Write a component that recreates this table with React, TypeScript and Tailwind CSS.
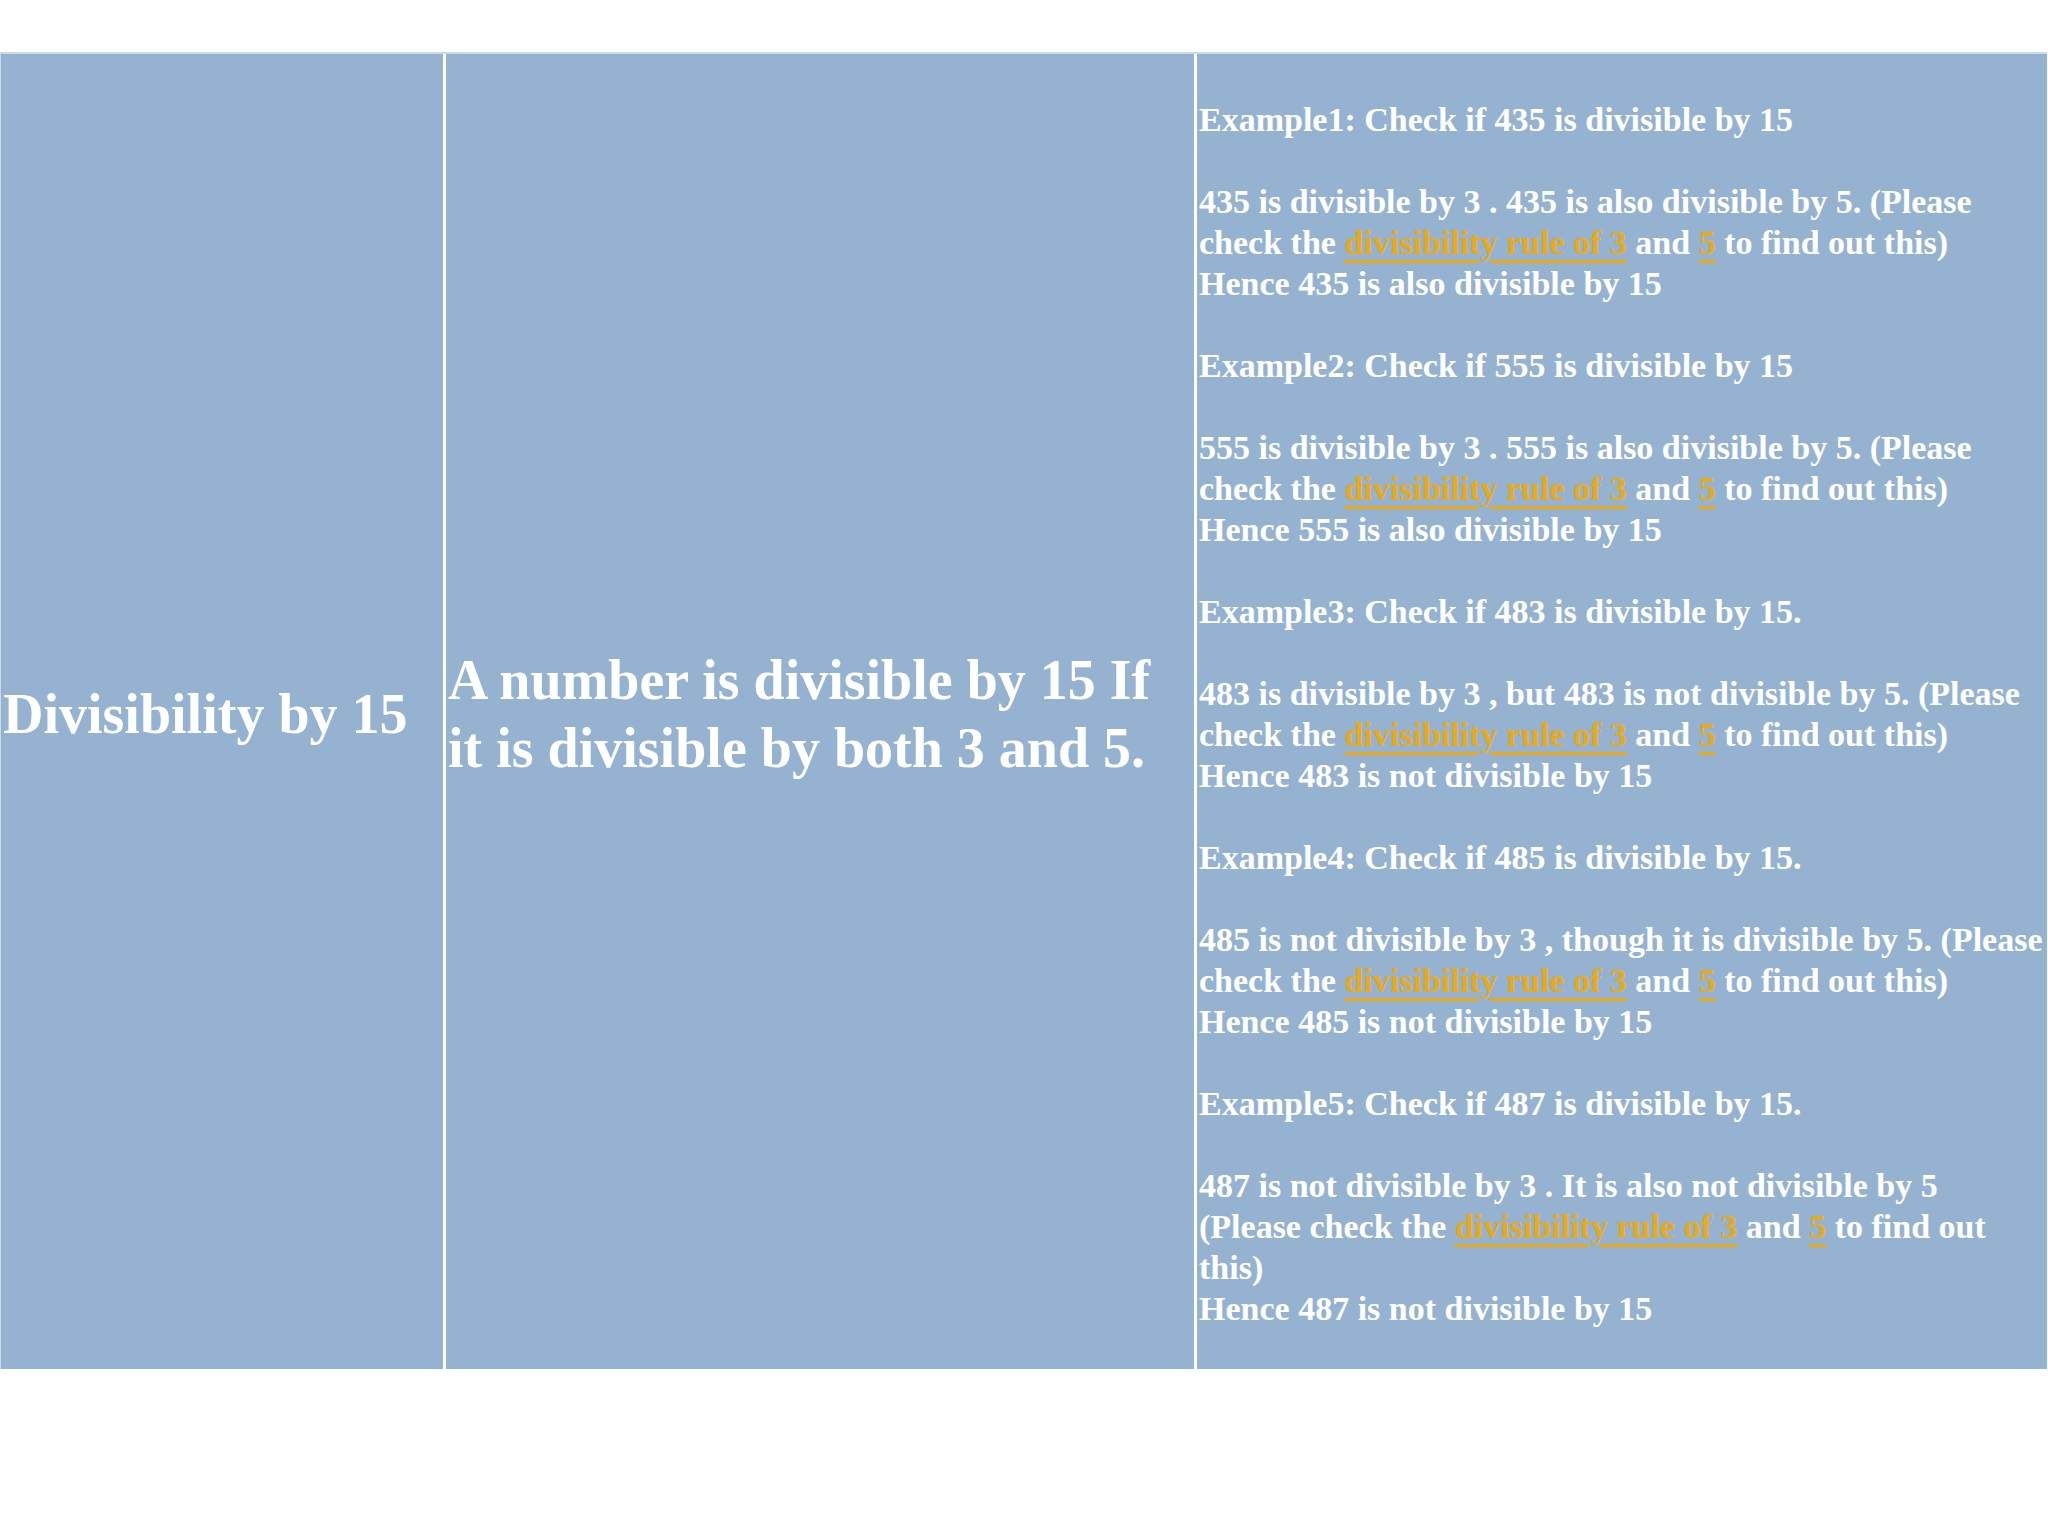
const examples = [
  {
    title: "Example1: Check if 435 is divisible by 15",
    lead: ["435 is divisible by 3 . 435 is also divisible by 5. (Please"],
    pre: "check the ",
    tail: " to find out this)",
    extra: [] as string[],
    result: "Hence 435 is also divisible by 15",
  },
  {
    title: "Example2: Check if 555 is divisible by 15",
    lead: ["555 is divisible by 3 . 555 is also divisible by 5. (Please"],
    pre: "check the ",
    tail: " to find out this)",
    extra: [] as string[],
    result: "Hence 555 is also divisible by 15",
  },
  {
    title: "Example3: Check if 483 is divisible by 15.",
    lead: ["483 is divisible by 3 , but 483 is not divisible by 5. (Please"],
    pre: "check the ",
    tail: " to find out this)",
    extra: [] as string[],
    result: "Hence 483 is not divisible by 15",
  },
  {
    title: "Example4: Check if 485 is divisible by 15.",
    lead: ["485 is not divisible by 3 , though it is divisible by 5. (Please"],
    pre: "check the ",
    tail: " to find out this)",
    extra: [] as string[],
    result: "Hence 485 is not divisible by 15",
  },
  {
    title: "Example5: Check if 487 is divisible by 15.",
    lead: ["487 is not divisible by 3 . It is also not divisible by 5"],
    pre: "(Please check the ",
    tail: " to find out",
    extra: ["this)"],
    result: "Hence 487 is not divisible by 15",
  },
];

const serif = "font-['Liberation_Serif','Times_New_Roman',serif] font-bold text-white";

const RuleLink = ({ children }: { children: string }) => (
  <a
    href="#"
    className="text-[#e9aa1a] underline decoration-[3px] underline-offset-[6px]"
  >
    {children}
  </a>
);

export default function App() {
  return (
    <div className="w-[2048px] h-[1536px] bg-white pt-[52px]">
      <div className="flex h-[1317px] w-[2047px] bg-[#95b3d1] border-t-2 border-[#c9dbea]">
        {/* Title */}
        <div className="w-[443px] shrink-0 flex items-center pl-[2px] pt-[5px] border-l border-[#c9dbea]">
          <h1 className={`${serif} text-[56px] leading-[68px] whitespace-nowrap`}>
            Divisibility by 15
          </h1>
        </div>

        {/* Rule */}
        <div className="w-[751px] shrink-0 flex items-center pl-[2px] pt-[5px] border-l-[3px] border-white">
          <p className={`${serif} text-[56px] leading-[68px] whitespace-nowrap`}>
            A number is divisible by 15 If
            <br />
            it is divisible by both 3 and 5.
          </p>
        </div>

        {/* Examples */}
        <div className="flex-1 flex items-center pl-[2px] pt-[5px] border-l-[3px] border-white">
          <div className={`${serif} text-[34px] leading-[41px] whitespace-nowrap`}>
            {examples.map((ex, i) => (
              <div key={i}>
                <div>{ex.title}</div>
                <div>&nbsp;</div>
                {ex.lead.map((l) => (
                  <div key={l}>{l}</div>
                ))}
                <div>
                  {ex.pre}
                  <RuleLink>divisibility rule of 3</RuleLink> and{" "}
                  <RuleLink>5</RuleLink>
                  {ex.tail}
                </div>
                {ex.extra.map((l) => (
                  <div key={l}>{l}</div>
                ))}
                <div>{ex.result}</div>
                {i < examples.length - 1 && <div>&nbsp;</div>}
              </div>
            ))}
          </div>
        </div>
      </div>
    </div>
  );
}
